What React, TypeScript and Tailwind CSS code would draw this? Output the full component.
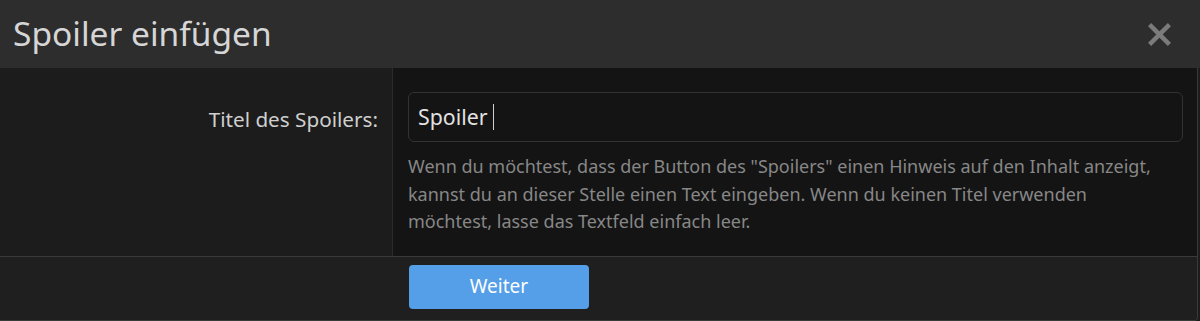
import React from "react";

export default function App() {
  return (
    <div className="w-[1200px] h-[321px] bg-[#1c1c1c] overflow-hidden" style={{ fontFamily: '"Noto Sans", "Open Sans", sans-serif' }}>
      <div className="h-[68px] bg-[#2d2d2d] flex items-center justify-between pl-[13px] pr-[29px]">
        <h1 className="text-[33.5px] text-[#d6d6d6] leading-none pb-[1px]">Spoiler einfügen</h1>
        <svg width="23" height="23" viewBox="0 0 22 22" className="mt-[1px]">
          <path d="M3 3 L19 19 M19 3 L3 19" stroke="#7b7b7b" strokeWidth="4.2" strokeLinecap="square" />
        </svg>
      </div>
      <div className="w-[1198px] h-[253px] border-r border-b border-[#3a3a3a] rounded-br-[4px] flex flex-col overflow-hidden">
        <div className="flex h-[189px] border-b border-[#3a3a3a]">
          <div className="w-[393px] bg-[#1c1c1c] border-r border-[#2b2b2b] flex justify-end pr-[14px] pt-[41px]">
            <span className="text-[20.7px] text-[#cfcfcf] leading-none">Titel des Spoilers:</span>
          </div>
          <div className="flex-1 bg-[#141414] pl-[15px] pr-[14px] pt-[24px]">
            <div className="h-[50px] border border-[#333333] rounded-[6px] flex items-center pl-[9px]">
              <span className="text-[21.3px] text-[#e2e2e2] leading-none">Spoiler</span>
              <span className="ml-[6px] w-[1px] h-[26px] bg-[#d0d0d0]" />
            </div>
            <p className="mt-[11px] text-[18px] leading-[27.5px] text-[#878787]">
              Wenn du möchtest, dass der Button des "Spoilers" einen Hinweis auf den Inhalt anzeigt,<br />
              kannst du an dieser Stelle einen Text eingeben. Wenn du keinen Titel verwenden<br />
              möchtest, lasse das Textfeld einfach leer.
            </p>
          </div>
        </div>
        <div className="flex-1 bg-[#1f1f1f] pl-[409px] pt-[8px]">
          <button className="w-[180px] h-[44px] bg-[#559ee8] rounded-[4px] text-white text-[19px] leading-none pb-[2px]">Weiter</button>
        </div>
      </div>
    </div>
  );
}
